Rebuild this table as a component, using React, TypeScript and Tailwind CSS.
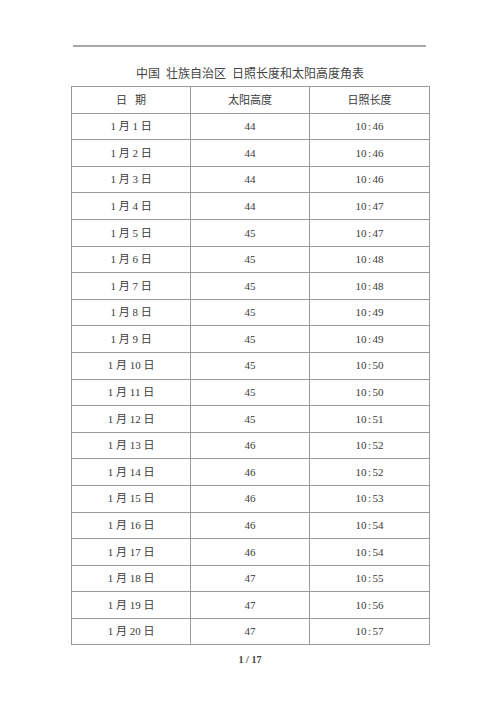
const rows: [string, string, string][] = [
  ['1', '44', '10:46'],
  ['2', '44', '10:46'],
  ['3', '44', '10:46'],
  ['4', '44', '10:47'],
  ['5', '45', '10:47'],
  ['6', '45', '10:48'],
  ['7', '45', '10:48'],
  ['8', '45', '10:49'],
  ['9', '45', '10:49'],
  ['10', '45', '10:50'],
  ['11', '45', '10:50'],
  ['12', '45', '10:51'],
  ['13', '46', '10:52'],
  ['14', '46', '10:52'],
  ['15', '46', '10:53'],
  ['16', '46', '10:54'],
  ['17', '46', '10:54'],
  ['18', '47', '10:55'],
  ['19', '47', '10:56'],
  ['20', '47', '10:57'],
];

const cell = 'border border-[#9a9a9a] h-[26.6px] p-0 text-center align-middle font-normal';

function Time({ value }: { value: string }) {
  const [h, m] = value.split(':');
  return (
    <span>
      {h}
      <span className="px-[1.5px]">:</span>
      {m}
    </span>
  );
}

export default function App() {
  return (
    <div className="w-[500px] h-[707px] bg-white text-[#3a3a3a] font-['Liberation_Serif','Noto_Sans_CJK_SC',serif]">
      <div className="pt-[45px] px-[73px]">
        <div className="h-[2px] w-[353px] bg-[#a8a8a8]" />
      </div>
      <div className="mt-[20px] text-center text-[12px] leading-[14px] text-[#444]">
        中国&nbsp;&nbsp;壮族自治区&nbsp;&nbsp;日照长度和太阳高度角表
      </div>
      <div className="mt-[5px] px-[71px]">
        <table className="w-[358px] border-collapse border-[1.5px] border-[#9a9a9a] table-fixed text-[11px]">
          <colgroup>
            <col className="w-[119px]" />
            <col className="w-[119px]" />
            <col className="w-[120px]" />
          </colgroup>
          <thead>
            <tr>
              <th className={cell}>日&nbsp;&nbsp;&nbsp;期</th>
              <th className={cell}>太阳高度</th>
              <th className={cell}>日照长度</th>
            </tr>
          </thead>
          <tbody>
            {rows.map(([d, h, l]) => (
              <tr key={d}>
                <td className={cell}>1 月 {d} 日</td>
                <td className={cell}>{h}</td>
                <td className={cell}>
                  <Time value={l} />
                </td>
              </tr>
            ))}
          </tbody>
        </table>
      </div>
      <div className="mt-[9px] text-center text-[10px] font-bold leading-[12px] text-[#444]">1 / 17</div>
    </div>
  );
}
